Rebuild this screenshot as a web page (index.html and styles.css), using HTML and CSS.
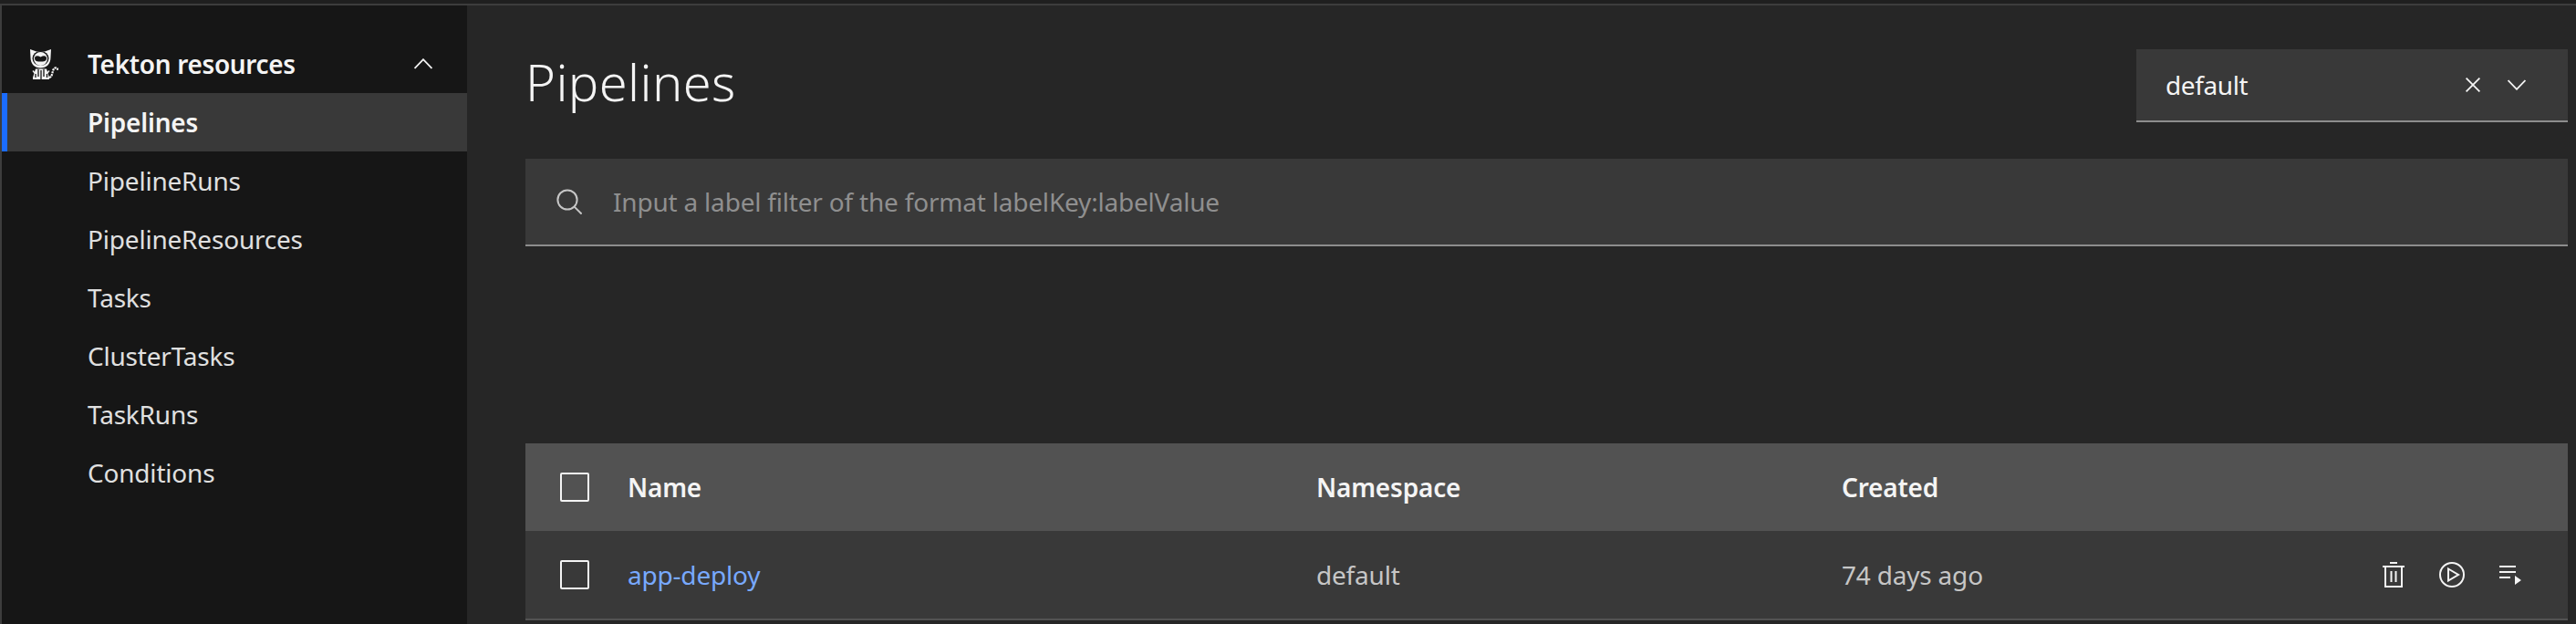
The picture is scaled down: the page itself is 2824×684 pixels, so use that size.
FILE: index.html
```html
<!DOCTYPE html>
<html lang="en">
<head>
<meta charset="utf-8">
<title>Tekton Dashboard - Pipelines</title>
<link rel="stylesheet" href="styles.css">
</head>
<body>
<div class="topline"></div>
<div class="layout">
  <nav class="sidebar">
    <div class="nav-head">
      <svg class="logo" viewBox="0 0 31 33" width="31" height="33" fill="none" stroke="#f4f4f4">
        <path d="M0 0 L7 2.500 H16 L23 0 L22.500 9 C22.500 16 18 20.500 11.500 20.500 C5 20.500 .5 16 .5 9 Z" fill="#f4f4f4" stroke="none"/>
        <ellipse cx="11.500" cy="10" rx="9" ry="8" fill="#161616" stroke="none"/>
        <ellipse cx="11.500" cy="10.500" rx="7.500" ry="7.500" fill="#f4f4f4" stroke="none"/>
        <path d="M5 10 C5 7 8 6.500 11.500 8.500 C15 6.500 18 7 18 10 C18 13 15 13.500 11.500 13.500 C8 13.500 5 13 5 10 Z" fill="#161616" stroke="none"/>
        <path d="M6 21.500 H18 L21 31 V33 H3 V31 Z" fill="#f4f4f4" stroke="none"/>
        <path d="M9 22 V30 M12 23 V33 M15 22 V30 M6 27 V31 M18.500 27 V31" stroke="#161616" stroke-width="1.300"/>
        <path d="M3 23.500 L5 26 M21 23.500 L19 26" stroke-width="1.400"/>
        <path d="M21 31 C25 30 24 24 26 21.500 C27 20 30 19.500 30.500 23" stroke-width="2.200" stroke-dasharray="2.200 .8"/>
      </svg>
      <span class="nav-title">Tekton resources</span>
      <svg class="nav-chevron" viewBox="0 0 20 12" width="20" height="12" fill="none" stroke="#f4f4f4" stroke-width="1.800"><path d="M.6 11 L10 1.200 L19.400 11"/></svg>
    </div>
    <a class="nav-item active">Pipelines</a>
    <a class="nav-item">PipelineRuns</a>
    <a class="nav-item">PipelineResources</a>
    <a class="nav-item">Tasks</a>
    <a class="nav-item">ClusterTasks</a>
    <a class="nav-item">TaskRuns</a>
    <a class="nav-item">Conditions</a>
  </nav>
  <main class="content">
    <header class="page-head">
      <h1 class="page-title">Pipelines</h1>
      <div class="dropdown">
        <span class="dropdown-value">default</span>
        <svg class="dropdown-clear" viewBox="0 0 16 16" width="16" height="16" fill="none" stroke="#f4f4f4" stroke-width="1.800"><path d="M.6 .6 L15.400 15.400 M15.400 .6 L.6 15.400"/></svg>
        <svg class="dropdown-chevron" viewBox="0 0 20 12" width="20" height="12" fill="none" stroke="#f4f4f4" stroke-width="1.800"><path d="M.6 1 L10 10.800 L19.400 1"/></svg>
      </div>
    </header>
    <div class="search">
      <svg class="search-icon" viewBox="0 0 28 28" width="28" height="28" fill="none" stroke="#c6c6c6" stroke-width="2"><circle cx="12" cy="12" r="10.600"/><path d="M19.600 19.600 L27.600 27.600"/></svg>
      <span class="search-placeholder">Input a label filter of the format labelKey:labelValue</span>
    </div>
    <div class="table">
      <div class="row row-head">
        <span class="check-cell"><span class="checkbox"></span></span>
        <span>Name</span>
        <span>Namespace</span>
        <span>Created</span>
      </div>
      <div class="row row-body">
        <span class="check-cell"><span class="checkbox"></span></span>
        <a class="link">app-deploy</a>
        <span>default</span>
        <span>74 days ago</span>
        <span class="actions">
          <span class="action">
            <svg viewBox="0 0 24 28" width="24" height="28" fill="none" stroke="#f4f4f4" stroke-width="2"><path d="M8 1 H16 M0 5 H24 M3 5 V27 H21 V5 M9.500 10 V22 M14.500 10 V22"/></svg>
          </span>
          <span class="action">
            <svg viewBox="0 0 28 28" width="28" height="28" fill="none" stroke="#f4f4f4" stroke-width="2"><circle cx="14" cy="14" r="13"/><path d="M10 7.500 L21 14 L10 20.500 Z"/></svg>
          </span>
          <span class="action">
            <svg viewBox="0 -2 24 24" width="24" height="24" fill="#f4f4f4" stroke="none"><path d="M0 0 H18 V2 H0 Z M0 6 H18 V8 H0 Z M0 12 H12 V14 H0 Z M17 11 L24 16 L17 21 Z"/></svg>
          </span>
        </span>
      </div>
    </div>
  </main>
</div>
</body>
</html>
```
FILE: styles.css
```css
* { box-sizing: border-box; }
html, body { margin: 0; height: 684px; overflow: hidden; }
body {
  background: #262626;
  color: #f4f4f4;
  font-family: "Noto Sans", "Open Sans", sans-serif;
  font-size: 28px;
  letter-spacing: -0.2px;
}
.topline {
  height: 6px;
  border-bottom: 2px solid #3d3d3d;
  background: #1f1f1f;
}
.layout { display: flex; height: 678px; }
.sidebar {
  width: 512px;
  flex: none;
  background: #161616;
  border-left: 2px solid #3d3d3d;
  padding-top: 32px;
}
.nav-head {
  height: 64px;
  display: flex;
  align-items: center;
  padding-left: 31px;
  font-weight: 600;
}
.logo { flex: none; }
.nav-title { margin-left: 32px; flex: 1; letter-spacing: -0.35px; }
.nav-chevron { margin-right: 38px; }
.nav-item {
  display: flex;
  align-items: center;
  height: 64px;
  padding-left: 94px;
  color: #e0e0e0;
}
.nav-item.active {
  background: #393939;
  border-left: 6px solid #1b6cff;
  padding-left: 88px;
  color: #f4f4f4;
  font-weight: 600;
}
.content { flex: 1; min-width: 0; padding: 48px 9px 0 64px; }
.page-head { display: flex; justify-content: space-between; align-items: flex-start; }
.page-title {
  margin: 0;
  font-size: 56px;
  font-weight: 300;
  line-height: 70px;
  letter-spacing: 0.4px;
}
.dropdown {
  width: 473px;
  height: 80px;
  display: flex;
  align-items: center;
  background: #393939;
  border-bottom: 2px solid #8d8d8d;
  padding-left: 32px;
}
.dropdown-value { flex: 1; letter-spacing: -0.4px; }
.dropdown-clear { margin-right: 30px; }
.dropdown-chevron { margin-right: 46px; }
.search {
  height: 96px;
  margin-top: 40px;
  display: flex;
  align-items: center;
  background: #393939;
  border-bottom: 2px solid #8d8d8d;
  padding-left: 34px;
}
.search-icon { flex: none; }
.search-placeholder { margin-left: 34px; color: #8f8f8f; }
.table { margin-top: 216px; }
.row {
  height: 96px;
  display: grid;
  grid-template-columns: 112px 755px 576px 1fr auto;
  align-items: center;
}
.row-head { background: #525252; font-weight: 600; }
.row-body { background: #393939; height: 98px; border-bottom: 2px solid #525252; color: #c6c6c6; }
.check-cell { display: flex; padding-left: 38px; }
.checkbox {
  width: 32px;
  height: 32px;
  border: 2px solid #f4f4f4;
  border-radius: 2px;
}
.link { color: #78a9ff; }
.actions { display: flex; padding-right: 31px; }
.action { width: 64px; display: flex; justify-content: center; align-items: center; }
```
